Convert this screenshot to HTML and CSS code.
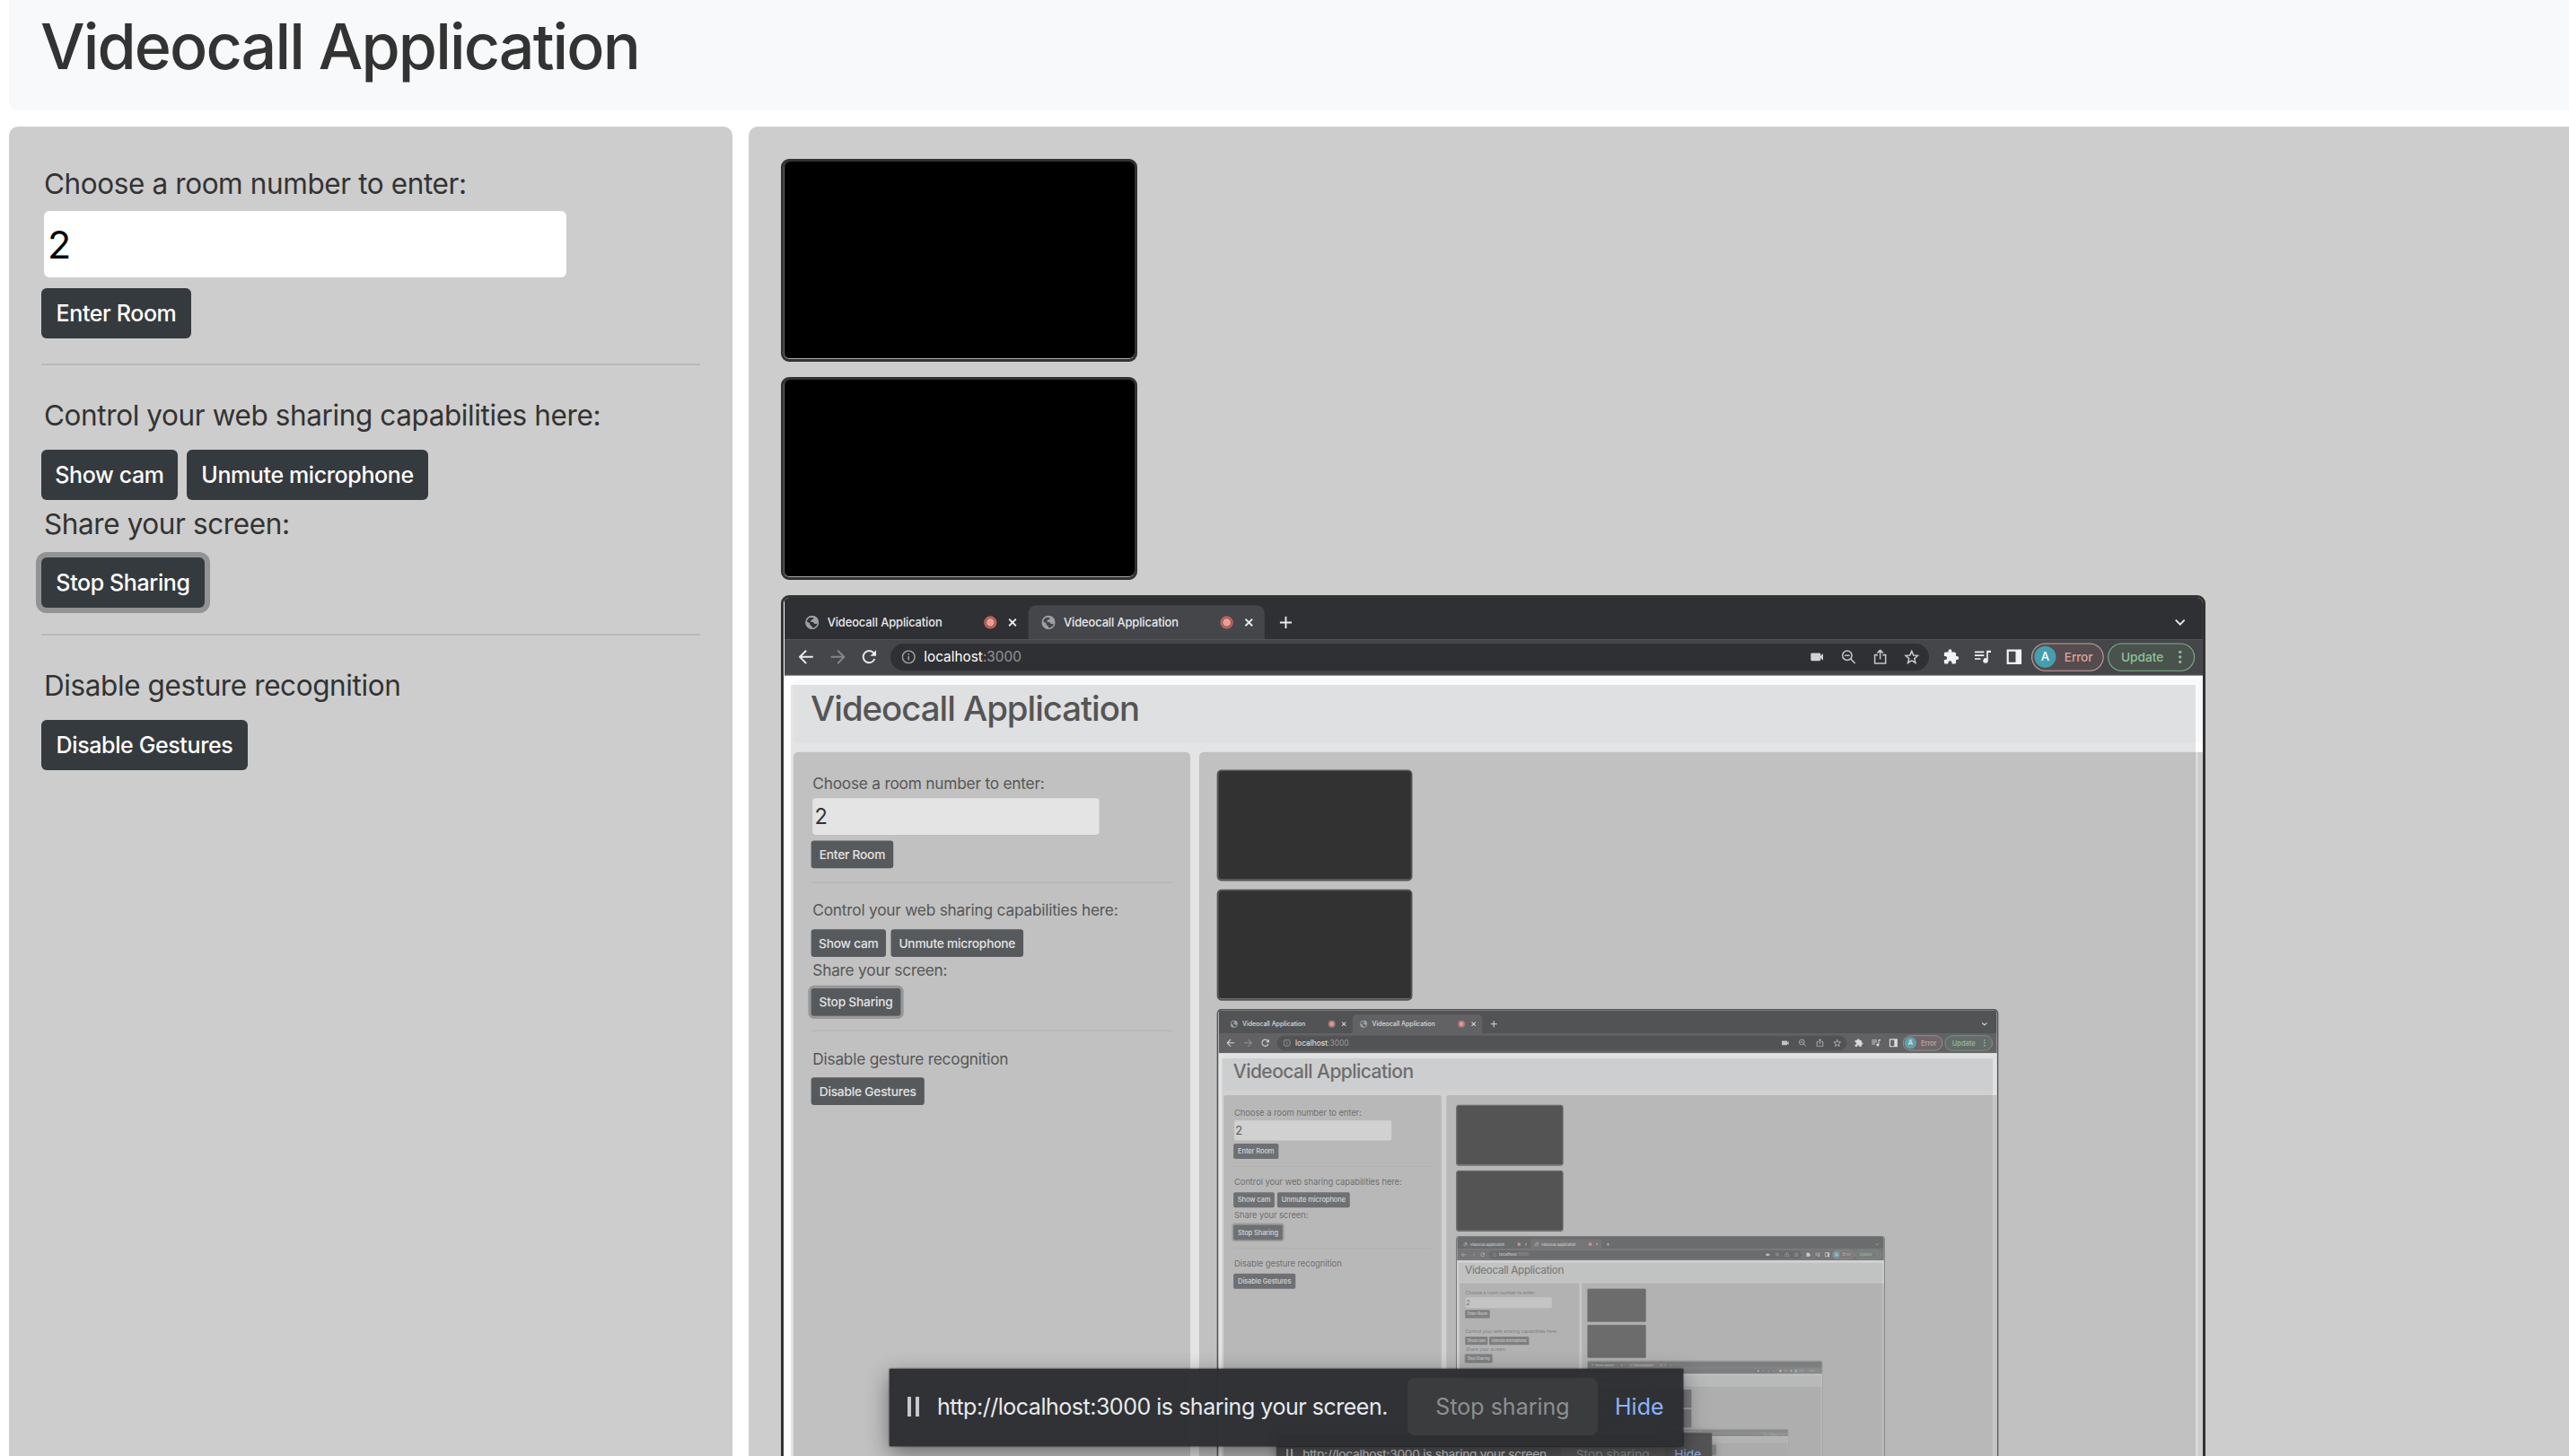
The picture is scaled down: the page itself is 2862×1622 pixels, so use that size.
FILE: index.html
```html
<!DOCTYPE html>
<html lang="en">
<head>
<meta charset="utf-8">
<title>Videocall Application</title>
<link rel="stylesheet" href="styles.css">
</head>
<body>
<div class="desktop" id="desktop">
  <div class="page">
    <header class="page-header"><h1>Videocall Application</h1></header>
    <div class="columns">
      <aside class="sidebar">
        <section class="group">
          <label class="label">Choose a room number to enter:</label>
          <div class="room-input">2</div>
          <div class="buttons"><button class="btn w-enter">Enter Room</button></div>
        </section>
        <section class="group group-share">
          <p class="label">Control your web sharing capabilities here:</p>
          <div class="buttons"><button class="btn w-cam">Show cam</button><button class="btn w-mic">Unmute microphone</button></div>
          <p class="label label-tight">Share your screen:</p>
          <div class="buttons"><button class="btn focused w-stop">Stop Sharing</button></div>
        </section>
        <section class="group group-gestures">
          <p class="label">Disable gesture recognition</p>
          <div class="buttons"><button class="btn w-gest">Disable Gestures</button></div>
        </section>
      </aside>
      <main class="stage">
        <div class="camera"></div>
        <div class="camera"></div>
        <div class="share"></div>
      </main>
    </div>
  </div>
  <div class="share-bar">
    <span class="pause"></span>
    <span class="share-text">http://localhost:3000 is sharing your screen.</span>
    <span class="share-stop">Stop sharing</span>
    <span class="share-hide">Hide</span>
  </div>
  <div class="capture-tint"></div>
</div>

<template id="browser">
  <div class="screen">
    <div class="tabs">
      <div class="tab">
        <svg class="globe" viewBox="0 0 28 28"><circle cx="14" cy="14" r="12.5" fill="none" stroke="#9aa0a6" stroke-width="3"/><path d="M2 12l7 3 1 4 4 3v5C6 27 1 20 2 12zM10 2l8-1c5 2 8 5 9 11l-3 5h-5l-3-4h-5l1-4 5-2-1-3h-4z" fill="#9aa0a6"/></svg>
        <span class="tab-title">Videocall Application</span>
        <i class="rec"></i>
        <svg class="close" viewBox="0 0 18 18"><path d="M2 2l14 14M16 2L2 16"/></svg>
      </div>
      <div class="tab active">
        <svg class="globe" viewBox="0 0 28 28"><circle cx="14" cy="14" r="12.5" fill="none" stroke="#9aa0a6" stroke-width="3"/><path d="M2 12l7 3 1 4 4 3v5C6 27 1 20 2 12zM10 2l8-1c5 2 8 5 9 11l-3 5h-5l-3-4h-5l1-4 5-2-1-3h-4z" fill="#9aa0a6"/></svg>
        <span class="tab-title">Videocall Application</span>
        <i class="rec"></i>
        <svg class="close" viewBox="0 0 18 18"><path d="M2 2l14 14M16 2L2 16"/></svg>
      </div>
      <svg class="plus" viewBox="0 0 26 26"><path d="M13 1v24M1 13h24"/></svg>
      <svg class="chevron" viewBox="0 0 22 14"><path d="M2 2l9 9 9-9"/></svg>
    </div>
    <div class="toolbar">
      <svg class="nav" viewBox="0 0 30 30"><path d="M29 15H3M15 2L2 15l13 13"/></svg>
      <svg class="nav off" viewBox="0 0 30 30"><path d="M1 15h26M15 2l13 13-13 13"/></svg>
      <svg class="nav" viewBox="0 0 30 30"><path d="M26 19a12 12 0 1 1-2-12"/><path class="solid" d="M29 1v12H17z"/></svg>
      <div class="omnibox">
        <svg class="info" viewBox="0 0 28 28"><circle cx="14" cy="14" r="12.5"/><path d="M14 12.5v8M14 7v3"/></svg>
        <span class="url">localhost<em>:3000</em></span>
        <svg class="o-icon" viewBox="0 0 30 30"><path class="solid" d="M4 7h16a2 2 0 0 1 2 2v4l5-5v14l-5-5v4a2 2 0 0 1-2 2H4a2 2 0 0 1-2-2V9a2 2 0 0 1 2-2z"/></svg>
        <svg class="o-icon" viewBox="0 0 30 30"><circle cx="12" cy="12" r="9.5"/><path d="M7 12h10M19 19l9 9"/></svg>
        <svg class="o-icon" viewBox="0 0 30 30"><path d="M10 11H4v17h22V11h-6M15 20V2M9 7l6-6 6 6"/></svg>
        <svg class="o-icon" viewBox="0 0 30 30"><path d="M15 3l3.500 8.500 9 .7-7 6 2.200 9L15 22.400 7.300 27.200l2.200-9-7-6 9-.7z"/></svg>
      </div>
      <svg class="t-icon" viewBox="0 0 24 24"><path fill="#f1f3f4" d="M20.500 11H19V7a2 2 0 0 0-2-2h-4V3.500a2.500 2.500 0 0 0-5 0V5H4a2 2 0 0 0-2 2v3.800h1.500a2.700 2.700 0 0 1 0 5.400H2V20a2 2 0 0 0 2 2h3.800v-1.500a2.700 2.700 0 0 1 5.400 0V22H17a2 2 0 0 0 2-2v-4h1.500a2.500 2.500 0 0 0 0-5z"/></svg>
      <svg class="t-icon" viewBox="0 0 34 34"><path d="M1 7h19M1 14h19M1 21h12" stroke="#f1f3f4" stroke-width="3" fill="none"/><path d="M34 4v4h-6v17a5 5 0 1 1-3-5V4z" fill="#f1f3f4"/></svg>
      <svg class="t-icon" viewBox="0 0 34 34"><path fill="#f1f3f4" fill-rule="evenodd" d="M2 2h30v30H2zM6 6v22h14V6z"/></svg>
      <div class="pill error"><b>A</b><span>Error</span></div>
      <div class="pill update"><span>Update</span><i class="dots"></i></div>
    </div>
    <div class="web"></div>
  </div>
</template>
<script src="mirror.js"></script>
</body>
</html>
```
FILE: mirror.js
```js
// The shared screen shows this same desktop, so it is repeated inside itself.
const DEPTH = 5;
const browser = document.getElementById('browser');
const desktop = document.getElementById('desktop');
const pristine = desktop.cloneNode(true);
pristine.removeAttribute('id');

let target = desktop;
for (let level = 0; level < DEPTH; level++) {
  const screen = browser.content.firstElementChild.cloneNode(true);
  const copy = pristine.cloneNode(true);
  copy.classList.add('nested');
  if (level > 0) copy.querySelector('.share-bar').remove();
  screen.querySelector('.web').append(copy);
  target.querySelector('.share').append(screen);
  target = copy;
}
```
FILE: styles.css
```css
* { box-sizing: border-box; }
html, body { margin: 0; height: 100%; overflow: hidden; background: #fff; }
body { font-family: Inter, "Liberation Sans", sans-serif; color: #333; }

.desktop { position: relative; width: 2862px; height: 1622px; overflow: hidden; background: #fff; }
.page { padding-left: 10px; }
.page-header { height: 123px; background: #f8f9fb; border-radius: 0 0 0 10px; padding: 9px 0 0 35px; }
h1 { margin: 0; font-size: 70px; line-height: 86px; font-weight: 500; white-space: nowrap; letter-spacing: -1.9px; }
.columns { display: flex; gap: 18px; margin-top: 18px; }
.sidebar { width: 806px; height: 1600px; flex: none; background: #cdcdcd; border-radius: 10px; padding: 44px 36px; }
.stage { flex: 1; height: 1700px; background: #cdcdcd; border-radius: 10px 0 0 10px; padding: 36px; display: flex; flex-direction: column; gap: 17px; }

.label { display: block; margin: 0; padding-left: 3px; font-size: 31.5px; line-height: 40px; white-space: nowrap; letter-spacing: -.4px; }
.room-input { width: 582px; height: 74px; margin: 10px 0 12px 3px; padding-left: 4px; border-radius: 6px; background: #fff; color: #000; font-size: 43px; line-height: 74px; }
.buttons { display: flex; gap: 10px; }
.btn { height: 56px; border: 0; padding: 0; border-radius: 6px; background: #353a3e; color: #fff; font: 500 25px Inter, sans-serif; letter-spacing: -.38px; white-space: nowrap; }
.w-enter { width: 167px; }
.w-cam { width: 152px; }
.w-mic { width: 269px; }
.w-stop { width: 182px; }
.w-gest { width: 230px; }
.focused { box-shadow: 0 0 0 6px #929394; }
.group-share, .group-gestures { border-top: 2px solid #b9b9b9; }
.group-share { margin-top: 28px; padding-top: 36px; }
.group-share .buttons { margin-top: 18px; }
.label-tight { margin-top: 7px; }
.group-share .label-tight + .buttons { margin-top: 17px; }
.group-gestures { margin-top: 29px; padding-top: 36px; }
.group-gestures .buttons { margin-top: 18px; }

.camera { flex: none; width: 397px; height: 226px; border-radius: 9px; background: #000; border: 3px solid #333; box-shadow: inset 0 -1px #aaa, inset 1px 0 #666; }
.share { flex: none; width: 1587px; height: 1200px; border: 3px solid #333; border-radius: 9px; background: #fff; overflow: hidden; padding-left: 1px; }

.screen { width: 2880px; height: 2200px; transform: scale(.5486); transform-origin: 0 0; background: #fff; }
.tabs { height: 84px; background: #2f3033; display: flex; align-items: center; padding: 15px 35px 0 15px; }
.tab { width: 480px; height: 69px; padding: 0 23px 0 27px; display: flex; align-items: center; color: #e8eaed; font-size: 23.5px; font-weight: 500; white-space: nowrap; border-radius: 16px 16px 0 0; }
.active { background: #45464a; }
.tab-title { margin-left: 17px; width: 319px; letter-spacing: -.2px; }
.globe { width: 28px; height: 28px; }
.rec { width: 26px; height: 26px; border-radius: 50%; border: 3px solid #c1665f; background: #ee9c93; background-clip: padding-box; box-shadow: inset 0 0 0 2px #8a4f4c; }
.close { width: 18px; height: 18px; margin-left: 23px; }
.close path, .plus path, .chevron path { stroke: #e8eaed; stroke-width: 3.5; fill: none; }
.plus { width: 26px; height: 26px; margin-left: 30px; }
.chevron { width: 22px; height: 14px; margin-left: auto; }
.toolbar { height: 74px; background: #45464a; border-bottom: 2px solid #5b5c5f; display: flex; align-items: center; padding-left: 29px; }
.nav { width: 30px; height: 30px; margin-right: 34px; flex: none; }
.nav path { fill: none; stroke: #e8eaed; stroke-width: 3.5; }
.nav .solid { fill: #e8eaed; stroke: none; }
.off path { stroke: #85868a; }
.omnibox { width: 2109px; height: 55px; flex: none; margin-left: -6px; border-radius: 28px; background: #2f3033; display: flex; align-items: center; padding: 0 20px 0 23px; margin-right: 28px; }
.info { width: 28px; height: 28px; }
.info circle, .info path { fill: none; stroke: #9aa0a6; stroke-width: 2.8; }
.o-icon path, .o-icon circle { fill: none; stroke: #c4c6ca; stroke-width: 2.8; }
.o-icon .solid { fill: #d0d2d5; stroke: none; }
.url { margin-left: 17px; margin-right: auto; font-size: 28px; color: #fff; }
.url em { font-style: normal; color: #929498; }
.o-icon { width: 30px; height: 30px; margin-left: 34px; }
.t-icon { width: 34px; height: 34px; margin-right: 30px; flex: none; }
.pill { height: 57px; border-radius: 29px; border: 2.5px solid; display: flex; align-items: center; font-size: 25px; font-weight: 500; }
.error { width: 147px; margin-left: -12px; color: #dda39e; border-color: #c9a19e; background: #554c4f; padding-left: 4px; }
.error b { width: 44px; height: 44px; border-radius: 50%; background: #459fae; color: #fff; font-weight: 500; font-size: 24px; text-align: center; line-height: 44px; margin-right: 17px; }
.error span { letter-spacing: -.3px; }
.update { width: 177px; margin-left: 8px; color: #8dc298; border-color: #7fae8a; background: #4a524e; padding-left: 25px; }
.dots { width: 6px; height: 6px; border-radius: 50%; background: #8dc298; margin-left: 30px; box-shadow: 0 -10px #8dc298, 0 10px #8dc298; }

/* The mirrored page sits a little inside the browser window and runs to its right edge. */
.web { padding: 7px 0 0 8px; background: #fff; }
.nested { width: 2872px; height: 2000px; }
.nested .page-header { height: 130px; padding-top: 16px; border-radius: 10px 0 0 10px; }
.capture-tint { display: none; }
.nested > .capture-tint { display: block; position: absolute; left: 0; top: 7px; width: 2862px; height: 1622px; background: rgba(166, 166, 166, .3); border: 4px solid rgba(255, 255, 255, .35); background-clip: padding-box; }

.share-bar { position: absolute; left: 991px; top: 1525px; width: 884px; height: 86px; background: rgba(45, 46, 49, .975); box-shadow: 0 8px 24px rgba(0, 0, 0, .45), 0 0 2px #000; display: flex; align-items: center; color: #e8eaed; font-size: 25px; white-space: nowrap; padding: 0 0 2px 20px; }
.nested > .share-bar { top: 1532px; }
.pause { width: 13px; height: 22px; border: solid #c8c8c8; border-width: 0 4px; flex: none; }
.share-text { margin-left: 20px; width: 524px; flex: none; letter-spacing: -.48px; }
.share-stop { width: 212px; height: 64px; line-height: 64px; border-radius: 8px; background: #3b3c3e; color: #8b9092; text-align: center; flex: none; }
.share-hide { margin-left: 19px; color: #8ab4f8; }
```
